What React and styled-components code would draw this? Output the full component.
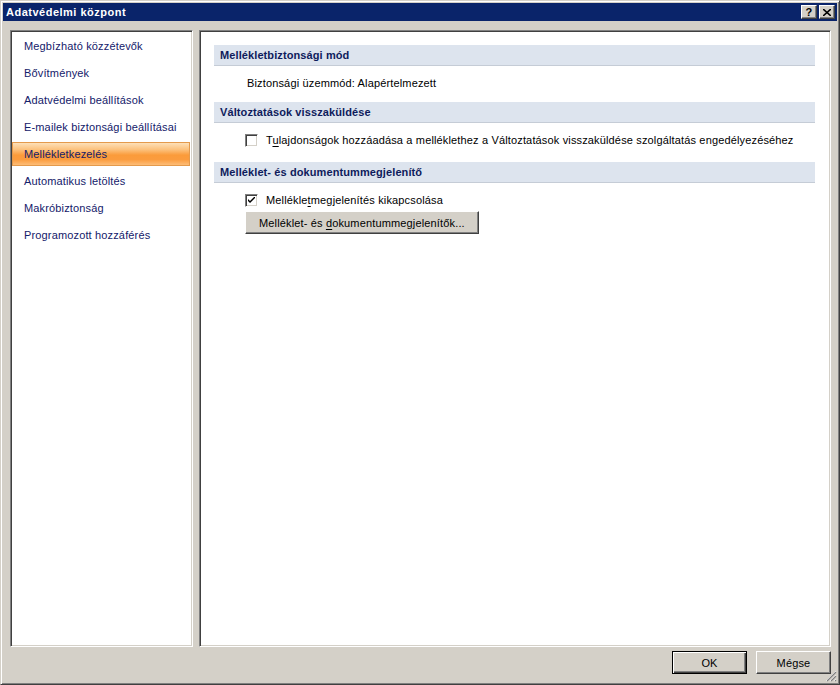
import React from "react";
import styled, { createGlobalStyle } from "styled-components";

const Global = createGlobalStyle`
  html, body { margin: 0; padding: 0; background: #d4d0c8; }
  body { font-family: "Liberation Sans", Arial, sans-serif; font-size: 11px; letter-spacing: 0.15px; }
  * { box-sizing: border-box; }
`;

const Window = styled.div`
  position: relative;
  width: 840px;
  height: 685px;
  background: #d4d0c8;
  border: 1px solid;
  border-color: #d4d0c8 #404040 #404040 #d4d0c8;
  box-shadow: inset 1px 1px 0 #ffffff, inset -1px -1px 0 #808080;
  padding: 2px;
  display: flex;
  flex-direction: column;
`;

const TitleBar = styled.div`
  height: 18px;
  background: #0a246a;
  display: flex;
  align-items: center;
  justify-content: space-between;
  padding: 0 2px 0 3px;
`;

const Title = styled.span`
  color: #ffffff;
  font-weight: bold;
  font-size: 11px;
  letter-spacing: 0.5px;
`;

const TitleButtons = styled.div`
  display: flex;
  gap: 2px;
`;

const TitleButton = styled.div`
  width: 16px;
  height: 14px;
  background: #d4d0c8;
  border: 1px solid;
  border-color: #ffffff #404040 #404040 #ffffff;
  box-shadow: inset -1px -1px 0 #808080;
  display: flex;
  align-items: center;
  justify-content: center;
  color: #000;
  font-weight: bold;
  font-size: 11px;
  line-height: 1;
`;

const Main = styled.div`
  flex: 1;
  display: grid;
  grid-template-columns: 183px 1fr;
  gap: 6px;
  padding: 9px 6px 0 7px;
  min-height: 0;
`;

const Panel = styled.div`
  background: #ffffff;
  border: 1px solid;
  border-color: #808080 #ffffff #ffffff #808080;
  box-shadow: inset 1px 1px 0 #404040, inset -1px -1px 0 #d4d0c8;
  padding: 1px;
`;

const NavList = styled.ul`
  list-style: none;
  margin: 0;
  padding: 0;
`;

const NavItem = styled.li`
  height: 27px;
  display: flex;
  align-items: center;
  padding: ${(p) => (p.$active ? "0" : "0 0 0 12px")};
  color: #14206a;
  font-size: 11px;
`;

const ActiveHighlight = styled.div`
  flex: 1;
  height: 24px;
  margin: 1px 1px 0 0;
  display: flex;
  align-items: center;
  padding-left: 11px;
  border: 1px solid #e49a4c;
  background: linear-gradient(
    to bottom,
    #fde0b8 0%,
    #fcc17c 30%,
    #fb9b3a 55%,
    #fb9c3e 75%,
    #fdbd78 100%
  );
  color: #14206a;
`;

const Content = styled.div`
  padding: 13px 14px 0 13px;
`;

const SectionHeader = styled.div`
  height: 21px;
  background: #dde4ee;
  border-bottom: 1px solid #c5ccd6;
  display: flex;
  align-items: center;
  padding-left: 6px;
  color: #0e1b5c;
  font-weight: bold;
  font-size: 11px;
  letter-spacing: 0.1px;
`;

const SectionBody = styled.div`
  padding: 9px 0 ${(p) => p.$bottom || 11}px ${(p) => p.$indent || 33}px;
  display: flex;
  flex-direction: column;
  align-items: flex-start;
  gap: 3px;
`;

const Line = styled.div`
  height: 16px;
  display: flex;
  align-items: center;
  color: #000;
  font-size: 11px;
  gap: 8px;
`;

const Box = styled.span`
  width: 13px;
  height: 13px;
  background: #ffffff;
  border: 1px solid;
  border-color: #808080 #ffffff #ffffff #808080;
  box-shadow: inset 1px 1px 0 #404040, inset -1px -1px 0 #d4d0c8;
  display: inline-flex;
  align-items: center;
  justify-content: center;
`;

const U = styled.span`
  text-decoration: underline;
  text-underline-offset: 2px;
`;

const Button = styled.button`
  height: 23px;
  min-width: ${(p) => (p.$wide ? "auto" : "75px")};
  padding: 0 ${(p) => (p.$wide ? "13px" : "0")};
  background: #d4d0c8;
  font-family: "Liberation Sans", Arial, sans-serif;
  font-size: 11px;
  letter-spacing: 0.15px;
  color: #000;
  border: 1px solid;
  border-color: ${(p) => (p.$default ? "#000" : "#ffffff #404040 #404040 #ffffff")};
  box-shadow: ${(p) =>
    p.$default
      ? "inset 1px 1px 0 #fff, inset -1px -1px 0 #404040, inset -2px -2px 0 #808080"
      : "inset -1px -1px 0 #808080"};
  cursor: default;
`;

const ButtonRow = styled.div`
  display: flex;
  justify-content: flex-end;
  gap: 9px;
  padding: 4px 6px 8px 0;
`;

const Grip = styled.svg`
  position: absolute;
  right: 2px;
  bottom: 2px;
`;

const navItems = [
  "Megbízható közzétevők",
  "Bővítmények",
  "Adatvédelmi beállítások",
  "E-mailek biztonsági beállításai",
  "Mellékletkezelés",
  "Automatikus letöltés",
  "Makróbiztonság",
  "Programozott hozzáférés",
];

const Check = () => (
  <svg width="7" height="7" viewBox="0 0 7 7">
    <path d="M0 2 L0 4 L2 6 L7 1 L7 -1 L2 4 Z" fill="#000" />
  </svg>
);

export default function App() {
  return (
    <>
      <Global />
      <Window>
        <TitleBar>
          <Title>Adatvédelmi központ</Title>
          <TitleButtons>
            <TitleButton>?</TitleButton>
            <TitleButton>
              <svg width="8" height="7" viewBox="0 0 8 7">
                <path d="M0 0 L8 7 M8 0 L0 7" stroke="#000" strokeWidth="1.6" />
              </svg>
            </TitleButton>
          </TitleButtons>
        </TitleBar>
        <Main>
          <Panel>
            <NavList>
              {navItems.map((t) =>
                t === "Mellékletkezelés" ? (
                  <NavItem key={t} $active>
                    <ActiveHighlight>{t}</ActiveHighlight>
                  </NavItem>
                ) : (
                  <NavItem key={t}>{t}</NavItem>
                )
              )}
            </NavList>
          </Panel>
          <Panel>
            <Content>
              <SectionHeader>Mellékletbiztonsági mód</SectionHeader>
              <SectionBody>
                <Line>Biztonsági üzemmód: Alapértelmezett</Line>
              </SectionBody>
              <SectionHeader>Változtatások visszaküldése</SectionHeader>
              <SectionBody $indent={31} $bottom={14}>
                <Line>
                  <Box />
                  <span>
                    T<U>u</U>lajdonságok hozzáadása a melléklethez a Változtatások
                    visszaküldése szolgáltatás engedélyezéséhez
                  </span>
                </Line>
              </SectionBody>
              <SectionHeader>Melléklet- és dokumentummegjelenítő</SectionHeader>
              <SectionBody $indent={31}>
                <Line>
                  <Box>
                    <Check />
                  </Box>
                  <span>
                    Mellékle<U>t</U>megjelenítés kikapcsolása
                  </span>
                </Line>
                <Button $wide>
                  Melléklet- és <U>d</U>okumentummegjelenítők...
                </Button>
              </SectionBody>
            </Content>
          </Panel>
        </Main>
        <ButtonRow>
          <Button $default>OK</Button>
          <Button>Mégse</Button>
        </ButtonRow>
        <Grip width="12" height="12" viewBox="0 0 12 12">
          <path d="M11 1 L1 11 M11 5 L5 11 M11 9 L9 11" stroke="#ffffff" strokeWidth="1" />
          <path d="M11 2 L2 11 M11 6 L6 11 M11 10 L10 11" stroke="#808080" strokeWidth="1.2" />
        </Grip>
      </Window>
    </>
  );
}
